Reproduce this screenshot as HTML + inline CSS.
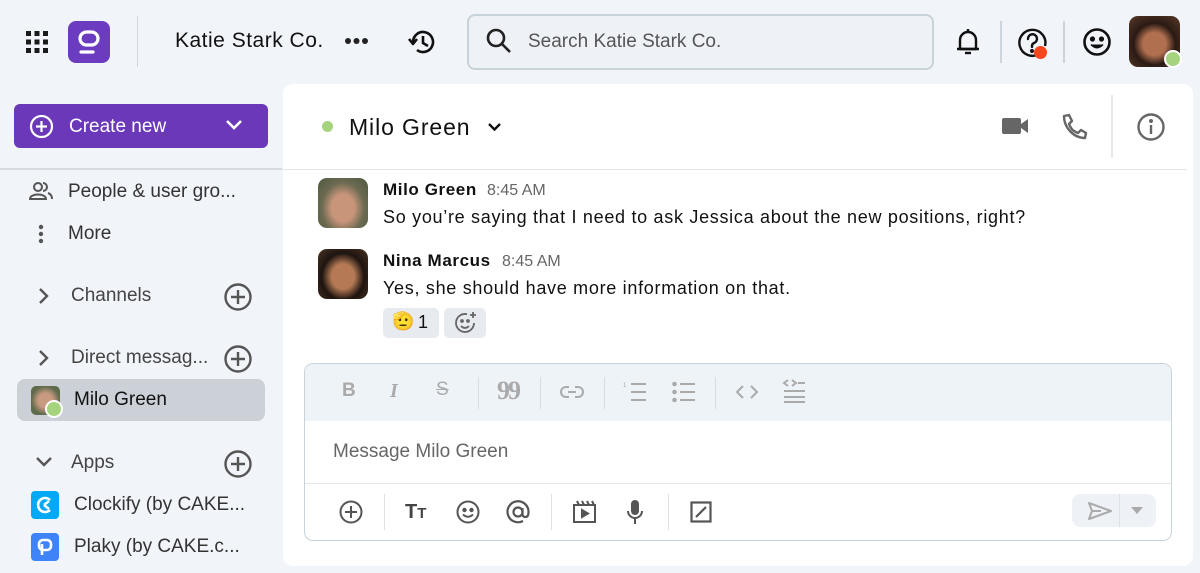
<!DOCTYPE html>
<html><head><meta charset="utf-8"><style>
*{box-sizing:border-box;margin:0;padding:0}
body{width:1200px;height:573px;background:#f1f4f8;font-family:"Liberation Sans",Roboto,sans-serif;position:relative;overflow:hidden;color:#1a1a1a}
.abs{position:absolute}
svg{display:block}
.t{position:absolute;white-space:nowrap}
</style></head><body>
<!-- top bar -->
<svg class="abs" style="left:25px;top:30px" width="24" height="24" viewBox="0 0 24 24" fill="#1a1a1a"><rect x="1" y="1" width="5" height="5"/><rect x="9.5" y="1" width="5" height="5"/><rect x="18" y="1" width="5" height="5"/><rect x="1" y="9.5" width="5" height="5"/><rect x="9.5" y="9.5" width="5" height="5"/><rect x="18" y="9.5" width="5" height="5"/><rect x="1" y="18" width="5" height="5"/><rect x="9.5" y="18" width="5" height="5"/><rect x="18" y="18" width="5" height="5"/></svg>
<div class="abs" style="left:68px;top:21px;width:42px;height:42px;border-radius:8px;background:#6b3cc0"></div>
<svg class="abs" style="left:68px;top:21px" width="42" height="42" viewBox="0 0 42 42" fill="none" stroke="#fff" stroke-width="3.2" stroke-linecap="round"><rect x="12" y="11" width="18" height="13" rx="6.5"/><line x1="13" y1="31" x2="25" y2="31"/></svg>
<div class="abs" style="left:137px;top:16px;width:1px;height:51px;background:#cfd6dd"></div>
<div class="t" style="left:175px;top:29px;font-size:21px;color:#111;letter-spacing:0.5px">Katie Stark Co.</div>
<svg class="abs" style="left:344px;top:37px" width="25" height="8" viewBox="0 0 25 8" fill="#222"><circle cx="4" cy="4" r="3"/><circle cx="12.5" cy="4" r="3"/><circle cx="21" cy="4" r="3"/></svg>
<svg class="abs" style="left:407px;top:28px" width="30" height="28" viewBox="0 0 30 28" fill="none" stroke="#111" stroke-width="2.6"><path d="M6 14 A10 10 0 1 1 10 22"/><path d="M2 11 L6 16 L10 11" stroke-linejoin="round"/><path d="M16 8 V15 L21 18"/></svg>
<div class="abs" style="left:467px;top:14px;width:467px;height:56px;border:2px solid #c8d2da;border-radius:8px;background:#eef2f6"></div>
<svg class="abs" style="left:486px;top:28px" width="26" height="26" viewBox="0 0 26 26" fill="none" stroke="#222" stroke-width="2.6"><circle cx="10" cy="10" r="8"/><line x1="16" y1="16" x2="24" y2="24"/></svg>
<div class="t" style="left:528px;top:31px;font-size:19px;color:#555">Search Katie Stark Co.</div>
<svg class="abs" style="left:955px;top:28px" width="26" height="28" viewBox="0 0 26 28" fill="none" stroke="#111" stroke-width="2.4"><path d="M5 21 V12 A8 8 0 0 1 21 12 V21 Z" stroke-linejoin="round"/><line x1="2" y1="21" x2="24" y2="21"/><path d="M10 25 H16"/><line x1="13" y1="1" x2="13" y2="4"/></svg>
<div class="abs" style="left:1000px;top:21px;width:2px;height:42px;background:#cdd4db"></div>
<svg class="abs" style="left:1017px;top:27px" width="34" height="34" viewBox="0 0 34 34" fill="none" stroke="#111" stroke-width="2.4"><path d="M22 27 A13 13 0 1 1 28 19"/><path d="M11 12 A4.5 4.5 0 1 1 17 16 C15 17 15 18 15 20" stroke-linecap="round"/><circle cx="15" cy="24" r="0.8" fill="#111"/></svg>
<div class="abs" style="left:1034px;top:46px;width:13px;height:13px;border-radius:50%;background:#f5471b"></div>
<div class="abs" style="left:1063px;top:21px;width:2px;height:42px;background:#cdd4db"></div>
<svg class="abs" style="left:1082px;top:27px" width="30" height="30" viewBox="0 0 30 30" fill="none" stroke="#111" stroke-width="2.6"><circle cx="15" cy="15" r="12.5"/><circle cx="10.5" cy="12" r="1.3" fill="#111"/><circle cx="19.5" cy="12" r="1.3" fill="#111"/><path d="M9 17.5 Q15 24 21 17.5" fill="#111" stroke-width="1.5"/></svg>
<div class="abs" style="left:1129px;top:16px;width:51px;height:51px;border-radius:9px;background:radial-gradient(circle at 50% 55%,#b07050 0 30%,#2a1a14 55%,#5a3a28 100%)"></div>
<div class="abs" style="left:1164px;top:50px;width:18px;height:18px;border-radius:50%;background:#a6d37e;border:2px solid #fff"></div>
<!-- sidebar -->
<div class="abs" style="left:14px;top:104px;width:254px;height:44px;border-radius:6px;background:#6a38b8"></div>
<svg class="abs" style="left:29px;top:114px" width="25" height="25" viewBox="0 0 25 25" fill="none" stroke="#fff" stroke-width="2.2"><circle cx="12.5" cy="12.5" r="10.5"/><path d="M12.5 7 V18 M7 12.5 H18"/></svg>
<div class="t" style="left:69px;top:116px;font-size:19px;color:#fff">Create new</div>
<svg class="abs" style="left:225px;top:119px" width="18" height="12" viewBox="0 0 18 12" fill="none" stroke="#fff" stroke-width="2.6"><path d="M2 2 L9 9 L16 2"/></svg>
<div class="abs" style="left:0;top:168px;width:282px;height:2px;background:#d5dbe1"></div>
<svg class="abs" style="left:29px;top:180px" width="24" height="22" viewBox="0 0 24 22" fill="none" stroke="#555" stroke-width="2"><circle cx="9" cy="7" r="4"/><path d="M1 19 C1 13 17 13 17 19 Z"/><path d="M14 3 A4 4 0 0 1 14 11 M19 13 C22 14 23 16 23 19"/></svg>
<div class="t" style="left:68px;top:181px;font-size:19px;color:#333">People &amp; user gro...</div>
<svg class="abs" style="left:38px;top:224px" width="6" height="20" viewBox="0 0 6 20" fill="#555"><circle cx="3" cy="3" r="2.2"/><circle cx="3" cy="10" r="2.2"/><circle cx="3" cy="17" r="2.2"/></svg>
<div class="t" style="left:68px;top:223px;font-size:19px;color:#333">More</div>
<svg class="abs" style="left:37px;top:287px" width="12" height="18" viewBox="0 0 12 18" fill="none" stroke="#555" stroke-width="2.4"><path d="M3 2 L10 9 L3 16"/></svg>
<div class="t" style="left:71px;top:285px;font-size:19px;color:#444">Channels</div>
<svg class="abs" style="left:223px;top:282px" width="30" height="30" viewBox="0 0 30 30" fill="none" stroke="#555" stroke-width="2.4"><circle cx="15" cy="15" r="12.5"/><path d="M15 8 V22 M8 15 H22"/></svg>
<svg class="abs" style="left:37px;top:349px" width="12" height="18" viewBox="0 0 12 18" fill="none" stroke="#555" stroke-width="2.4"><path d="M3 2 L10 9 L3 16"/></svg>
<div class="t" style="left:71px;top:347px;font-size:19px;color:#444">Direct messag...</div>
<svg class="abs" style="left:223px;top:344px" width="30" height="30" viewBox="0 0 30 30" fill="none" stroke="#555" stroke-width="2.4"><circle cx="15" cy="15" r="12.5"/><path d="M15 8 V22 M8 15 H22"/></svg>
<div class="abs" style="left:17px;top:379px;width:248px;height:42px;border-radius:8px;background:#cbd1d7"></div>
<div class="abs" style="left:31px;top:386px;width:29px;height:29px;border-radius:5px;background:radial-gradient(circle at 50% 50%,#c89a80 0 35%,#5e6a4a 70%)"></div>
<div class="abs" style="left:45px;top:400px;width:18px;height:18px;border-radius:50%;background:#a6d37e;border:2px solid #fff"></div>
<div class="t" style="left:74px;top:389px;font-size:19px;color:#111">Milo Green</div>
<svg class="abs" style="left:35px;top:456px" width="18" height="12" viewBox="0 0 18 12" fill="none" stroke="#555" stroke-width="2.4"><path d="M2 2 L9 9 L16 2"/></svg>
<div class="t" style="left:71px;top:452px;font-size:19px;color:#444">Apps</div>
<svg class="abs" style="left:223px;top:449px" width="30" height="30" viewBox="0 0 30 30" fill="none" stroke="#555" stroke-width="2.4"><circle cx="15" cy="15" r="12.5"/><path d="M15 8 V22 M8 15 H22"/></svg>
<div class="abs" style="left:31px;top:491px;width:28px;height:28px;border-radius:4px;background:#03a9f4"></div>
<svg class="abs" style="left:31px;top:491px" width="28" height="28" viewBox="0 0 28 28" fill="none" stroke="#fff" stroke-width="2.6"><path d="M19 9 A7 7 0 1 0 19 19"/><path d="M13 14 L18 10 M13 14 L18 18"/></svg>
<div class="t" style="left:74px;top:494px;font-size:19px;color:#333">Clockify (by CAKE...</div>
<div class="abs" style="left:31px;top:533px;width:28px;height:28px;border-radius:4px;background:#3f83f8"></div>
<svg class="abs" style="left:31px;top:533px" width="28" height="28" viewBox="0 0 28 28" fill="none" stroke="#fff" stroke-width="2.6"><rect x="8" y="7" width="12" height="10" rx="4"/><path d="M11 11 V22"/></svg>
<div class="t" style="left:74px;top:536px;font-size:19px;color:#333">Plaky (by CAKE.c...</div>
<!-- main panel -->
<div class="abs" style="left:283px;top:84px;width:910px;height:482px;border-radius:10px;background:#fff"></div>
<div class="abs" style="left:322px;top:121px;width:11px;height:11px;border-radius:50%;background:#a6d37e"></div>
<div class="t" style="left:349px;top:114px;font-size:23px;color:#111;letter-spacing:0.9px">Milo Green</div>
<svg class="abs" style="left:487px;top:122px" width="15" height="10" viewBox="0 0 15 10" fill="none" stroke="#111" stroke-width="2.4"><path d="M2 2 L7.5 7.5 L13 2"/></svg>
<svg class="abs" style="left:1001px;top:115px" width="28" height="22" viewBox="0 0 28 22" fill="#666"><rect x="1" y="3" width="19" height="16" rx="2"/><path d="M20 9 L27 4 V18 L20 13 Z"/></svg>
<svg class="abs" style="left:1060px;top:113px" width="28" height="28" viewBox="0 0 28 28" fill="none" stroke="#666" stroke-width="2.4" stroke-linejoin="round"><path d="M4 3 L9 2 L12 8 L9 11 C11 16 13 18 18 20 L21 17 L26 20 L25 25 C14 25 4 15 4 3 Z"/></svg>
<div class="abs" style="left:1111px;top:95px;width:2px;height:63px;background:#e6eaee"></div>
<svg class="abs" style="left:1136px;top:112px" width="30" height="30" viewBox="0 0 30 30" fill="none" stroke="#666" stroke-width="2.4"><circle cx="15" cy="15" r="12.5"/><line x1="15" y1="13" x2="15" y2="22"/><circle cx="15" cy="9" r="0.8" fill="#666"/></svg>
<div class="abs" style="left:283px;top:169px;width:904px;height:1px;background:#e3e7eb"></div>
<!-- messages -->
<div class="abs" style="left:318px;top:178px;width:50px;height:50px;border-radius:9px;background:radial-gradient(ellipse at 50% 60%,#c8957a 0 32%,#6c6a52 60%,#4d5a3c 100%)"></div>
<div class="t" style="left:383px;top:180px;font-size:17px;font-weight:bold;color:#111;letter-spacing:0.6px">Milo Green</div>
<div class="t" style="left:487px;top:182px;font-size:16px;color:#666">8:45 AM</div>
<div class="t" style="left:383px;top:207px;font-size:18px;color:#111;letter-spacing:0.7px">So you’re saying that I need to ask Jessica about the new positions, right?</div>
<div class="abs" style="left:318px;top:249px;width:50px;height:50px;border-radius:9px;background:radial-gradient(ellipse at 50% 55%,#b57a55 0 32%,#1e1410 60%,#4a3424 100%)"></div>
<div class="t" style="left:383px;top:251px;font-size:17px;font-weight:bold;color:#111;letter-spacing:0.6px">Nina Marcus</div>
<div class="t" style="left:502px;top:253px;font-size:16px;color:#666">8:45 AM</div>
<div class="t" style="left:383px;top:278px;font-size:18px;color:#111;letter-spacing:0.7px">Yes, she should have more information on that.</div>
<div class="abs" style="left:383px;top:308px;width:56px;height:30px;border-radius:5px;background:#e7ebef"></div>
<div class="t" style="left:392px;top:311px;font-size:18px;color:#f1b83a">🫡</div>
<div class="t" style="left:418px;top:312px;font-size:18px;color:#111">1</div>
<div class="abs" style="left:444px;top:308px;width:42px;height:30px;border-radius:5px;background:#e7ebef"></div>
<svg class="abs" style="left:454px;top:311px" width="24" height="24" viewBox="0 0 24 24" fill="none" stroke="#666" stroke-width="1.8"><path d="M20 12 A9 9 0 1 1 13 3.2"/><circle cx="8" cy="10" r="1" fill="#666"/><circle cx="14" cy="10" r="1" fill="#666"/><path d="M7 15 Q11 19 15 15"/><path d="M19 1 V7 M16 4 H22"/></svg>
<!-- composer -->
<div class="abs" style="left:304px;top:363px;width:868px;height:178px;border:1.5px solid #c9d3db;border-radius:9px;background:#fff;overflow:hidden">
 <div style="height:57px;background:#eef3f8"></div>
 <div style="position:absolute;left:0;top:119px;width:100%;height:1px;background:#e0e5ea"></div>
</div>
<div class="t" style="left:342px;top:380px;font-size:19px;font-weight:bold;color:#aaa">B</div>
<div class="t" style="left:390px;top:380px;font-size:20px;font-style:italic;font-weight:bold;color:#aaa;font-family:'Liberation Serif',serif">I</div>
<div class="t" style="left:436px;top:379px;font-size:19px;color:#aaa;text-decoration:line-through">S</div>
<div class="abs" style="left:478px;top:377px;width:1px;height:32px;background:#d8dde2"></div>
<div class="t" style="left:497px;top:376px;font-size:26px;font-weight:bold;color:#aaa;letter-spacing:-2px;font-family:'Liberation Serif',serif">99</div>
<div class="abs" style="left:540px;top:377px;width:1px;height:32px;background:#d8dde2"></div>
<svg class="abs" style="left:560px;top:384px" width="24" height="16" viewBox="0 0 24 16" fill="none" stroke="#aaa" stroke-width="2"><path d="M9 3 H6 A5 5 0 0 0 6 13 H9 M15 3 H18 A5 5 0 0 1 18 13 H15 M8 8 H16"/></svg>
<div class="abs" style="left:604px;top:377px;width:1px;height:32px;background:#d8dde2"></div>
<svg class="abs" style="left:623px;top:380px" width="24" height="24" viewBox="0 0 24 24" fill="none" stroke="#aaa" stroke-width="2"><path d="M8 4 H23 M8 12 H23 M8 20 H23"/><text x="0" y="7" font-size="6" fill="#aaa" stroke="none">1</text></svg>
<svg class="abs" style="left:672px;top:380px" width="24" height="24" viewBox="0 0 24 24" fill="none" stroke="#aaa" stroke-width="2"><path d="M8 4 H23 M8 12 H23 M8 20 H23"/><circle cx="2.5" cy="4" r="1.3" fill="#aaa"/><circle cx="2.5" cy="12" r="1.3" fill="#aaa"/><circle cx="2.5" cy="20" r="1.3" fill="#aaa"/></svg>
<div class="abs" style="left:715px;top:377px;width:1px;height:32px;background:#d8dde2"></div>
<svg class="abs" style="left:735px;top:384px" width="24" height="16" viewBox="0 0 24 16" fill="none" stroke="#aaa" stroke-width="2"><path d="M8 2 L2 8 L8 14 M16 2 L22 8 L16 14"/></svg>
<svg class="abs" style="left:782px;top:378px" width="24" height="26" viewBox="0 0 24 26" fill="none" stroke="#aaa" stroke-width="2"><path d="M6 2 L2 5 L6 8 M10 2 L14 5 L10 8 M16 5 H23 M2 13 H23 M2 19 H23 M2 24 H23"/></svg>
<div class="t" style="left:333px;top:441px;font-size:19px;color:#666">Message Milo Green</div>
<svg class="abs" style="left:339px;top:500px" width="24" height="24" viewBox="0 0 24 24" fill="none" stroke="#555" stroke-width="2"><circle cx="12" cy="12" r="10.5"/><path d="M12 6 V18 M6 12 H18"/></svg>
<div class="abs" style="left:384px;top:494px;width:1px;height:36px;background:#dde2e7"></div>
<div class="t" style="left:405px;top:501px;font-size:20px;font-weight:bold;color:#444">T<span style="font-size:15px">T</span></div>
<svg class="abs" style="left:456px;top:500px" width="24" height="24" viewBox="0 0 24 24" fill="none" stroke="#555" stroke-width="2"><circle cx="12" cy="12" r="10.5"/><circle cx="8.5" cy="10" r="1.2" fill="#555"/><circle cx="15.5" cy="10" r="1.2" fill="#555"/><path d="M7 14.5 Q12 19 17 14.5"/></svg>
<svg class="abs" style="left:506px;top:500px" width="24" height="24" viewBox="0 0 24 24" fill="none" stroke="#555" stroke-width="2.2"><circle cx="12" cy="12" r="4.5"/><path d="M16.5 8 V14 Q16.5 17 19.5 17 Q22.5 17 22.5 12 A10.5 10.5 0 1 0 17 21"/></svg>
<div class="abs" style="left:551px;top:494px;width:1px;height:36px;background:#dde2e7"></div>
<svg class="abs" style="left:572px;top:499px" width="26" height="26" viewBox="0 0 26 26" fill="none" stroke="#555" stroke-width="2"><rect x="2" y="6" width="21" height="17"/><path d="M5 2 L7 6 M10 2 L12 6 M15 2 L17 6 M20 2 L22 6"/><path d="M10 11 L16 14.5 L10 18 Z" fill="#555"/></svg>
<svg class="abs" style="left:626px;top:499px" width="18" height="26" viewBox="0 0 18 26" fill="#555"><rect x="5" y="1" width="8" height="15" rx="4"/><path d="M2 12 A7 7 0 0 0 16 12" fill="none" stroke="#555" stroke-width="2"/><rect x="8" y="19" width="2" height="6"/></svg>
<div class="abs" style="left:668px;top:494px;width:1px;height:36px;background:#dde2e7"></div>
<svg class="abs" style="left:690px;top:501px" width="22" height="22" viewBox="0 0 22 22" fill="none" stroke="#555" stroke-width="2.2"><rect x="1.5" y="1.5" width="19" height="19"/><path d="M6 16 L16 6"/></svg>
<div class="abs" style="left:1072px;top:494px;width:84px;height:33px;border-radius:8px;background:#eef2f6"></div>
<div class="abs" style="left:1119px;top:494px;width:1px;height:33px;background:#dde2e7"></div>
<svg class="abs" style="left:1087px;top:501px" width="26" height="20" viewBox="0 0 26 20" fill="none" stroke="#aaa" stroke-width="2" stroke-linejoin="round"><path d="M2 2 L24 10 L2 18 L5 10 Z M5 10 H14"/></svg>
<svg class="abs" style="left:1131px;top:507px" width="12" height="7" viewBox="0 0 12 7" fill="#aaa"><path d="M0 0 H12 L6 7 Z"/></svg>
</body></html>
